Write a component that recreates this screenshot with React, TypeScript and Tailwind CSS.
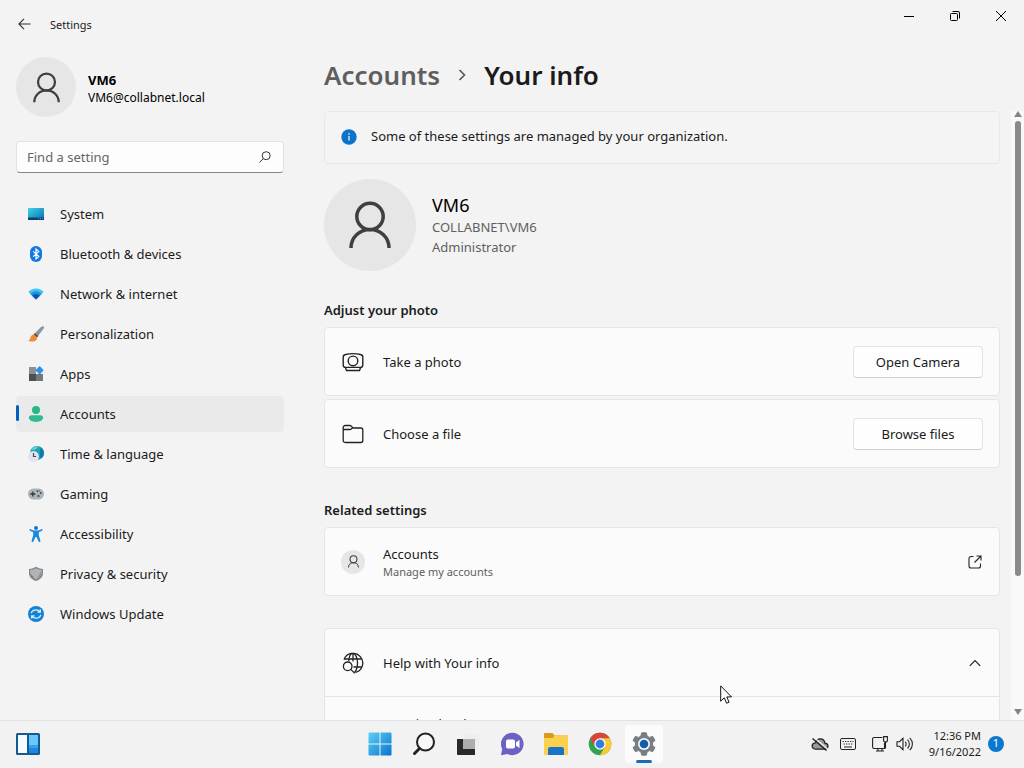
import type { ReactNode } from "react";

type NavItem = { label: string; icon: ReactNode; active?: boolean };

function UserIcon({ className, stroke = 2 }: { className?: string; stroke?: number }) {
  return (
    <svg viewBox="0 0 42 48" className={className} fill="none" stroke="#3f3f3f" strokeWidth={stroke}>
      <circle cx="21" cy="15.5" r="13.2" />
      <path d="M2 47c0-10.500 8.500-18.500 19-18.500s19 8 19 18.500" />
    </svg>
  );
}

const navItems: NavItem[] = [
  {
    label: "System",
    icon: (
      <svg viewBox="0 0 16 16" className="size-4">
        <defs>
          <linearGradient id="sys" x1="0" y1="0" x2="1" y2="1">
            <stop offset="0" stopColor="#3fd3e6" />
            <stop offset="1" stopColor="#0a6fb4" />
          </linearGradient>
        </defs>
        <rect y="2" width="16" height="12" rx="0.8" fill="url(#sys)" />
        <path d="M0 11.500h16v1.700a.8.8 0 0 1-.8.8H.8a.8.8 0 0 1-.8-.8z" fill="#0b3f70" />
        <path d="M10 12.700h1M12 12.700h1M14 12.700h1" stroke="#5fc4ee" strokeWidth="0.800" />
      </svg>
    ),
  },
  {
    label: "Bluetooth & devices",
    icon: (
      <svg viewBox="0 0 16 16" className="size-4">
        <rect x="2" width="12" height="16" rx="6" fill="#0f78e6" />
        <path d="M5.200 5.400l5.600 5L8 12.900V3.100l2.800 2.500-5.600 5" fill="none" stroke="#fff" strokeWidth="1.200" />
      </svg>
    ),
  },
  {
    label: "Network & internet",
    icon: (
      <svg viewBox="0 0 16 16" className="size-4">
        <path d="M8 13.500L.3 6C2.200 3.800 5 2.600 8 2.600S13.800 3.800 15.700 6z" fill="#45c5ee" />
        <path d="M8 13.500L2.300 7.900C3.700 6.200 5.700 5.300 8 5.300s4.300.9 5.700 2.600z" fill="#1c95dd" />
        <path d="M8 13.500l-3.800-3.700C5.200 8.700 6.500 8 8 8s2.800.7 3.800 1.800z" fill="#0c55b5" />
      </svg>
    ),
  },
  {
    label: "Personalization",
    icon: (
      <svg viewBox="0 0 16 16" className="size-4">
        <path d="M15.700.4c.6.6.2 1.800-.6 2.900L9.300 11 5.800 8.300 12.500 1.500C13.600.5 15.100-.2 15.700.4z" fill="#8798a3" />
        <path d="M6.900 7.200l3.400 2.800-1.300 1.600-3.500-3z" fill="#5f5148" />
        <path d="M5.500 8.500L9 11.400c.3 2-1.600 4-4.300 4.200-1.700.1-3.400-.3-4.500-1 1.800-.4 1.800-1.400 2.300-3 .5-1.700 1.500-2.900 3-3.100z" fill="#ef8a35" />
      </svg>
    ),
  },
  {
    label: "Apps",
    icon: (
      <svg viewBox="0 0 16 16" className="size-4">
        <path d="M1 1h7v7H1z" fill="#8d9092" />
        <path d="M1 8h7v7H1z" fill="#4c4f52" />
        <path d="M8 8h7v7H8z" fill="#75787b" />
        <rect x="8.600" y="1.200" width="6" height="6" rx="0.800" transform="rotate(45 11.600 4.200)" fill="#2f91e4" />
      </svg>
    ),
  },
  {
    label: "Accounts",
    active: true,
    icon: (
      <svg viewBox="0 0 16 16" className="size-4">
        <circle cx="8" cy="4" r="4" fill="#27b78c" />
        <path d="M3.400 9.300h9.200c1.600 0 2.500.9 2.500 2.300 0 2.600-3 4.400-7.100 4.400S.9 14.200.9 11.600c0-1.400.9-2.300 2.500-2.300z" fill="#2fba91" />
      </svg>
    ),
  },
  {
    label: "Time & language",
    icon: (
      <svg viewBox="0 0 16 16" className="size-4">
        <circle cx="9" cy="7" r="7" fill="#1ba3b8" />
        <path d="M12 .7c1 1.300 1 2.300 0 3.800s1 2.500 0 4.500 1 2 1.500 3.200A7 7 0 0 0 12 .7z" fill="#1277ae" />
        <path d="M4 3c2-2 4-2.500 6-2.500C9 3 7 4 4 4z" fill="#68d7d4" />
        <circle cx="5.500" cy="10.400" r="5.400" fill="#e6e1ee" />
        <path d="M5.500 7v3.500h2.600" fill="none" stroke="#45475a" strokeWidth="1.200" />
      </svg>
    ),
  },
  {
    label: "Gaming",
    icon: (
      <svg viewBox="0 0 16 16" className="size-4">
        <rect y="2.500" width="16" height="11" rx="5.500" fill="#aab4ba" />
        <path d="M4.800 5.500v5M2.300 8h5" stroke="#34393d" strokeWidth="1.300" />
        <g fill="#3f474d">
          <circle cx="9.500" cy="5.200" r="0.900" />
          <circle cx="12.800" cy="7" r="0.900" />
          <circle cx="10.500" cy="10" r="1.100" />
          <circle cx="11.500" cy="4.800" r="0.500" />
        </g>
      </svg>
    ),
  },
  {
    label: "Accessibility",
    icon: (
      <svg viewBox="0 0 16 16" className="size-4">
        <circle cx="8" cy="2" r="2" fill="#1278d4" />
        <path d="M2.300 3c1.800 1.200 3.800 1.500 5.700 1.500s3.900-.3 5.700-1.500c.8-.2 1.100.9.500 1.400-1 .8-2.400 1.300-3.400 1.600v3.200l1.600 5.600c.2 1.200-1.300 1.600-1.800.6L8.500 11h-1l-2.100 4.400c-.5 1-2 .6-1.800-.6l1.600-5.600V6c-1-.3-2.400-.8-3.400-1.600-.6-.5-.3-1.600.5-1.400z" fill="#1b87de" />
      </svg>
    ),
  },
  {
    label: "Privacy & security",
    icon: (
      <svg viewBox="0 0 16 16" className="size-4">
        <path d="M8 .8c2 1.300 4.300 2 7 2.200v4.200c0 3.600-2.700 6.200-7 7.900-4.300-1.700-7-4.300-7-7.900V3c2.700-.2 5-.9 7-2.200z" fill="#82868a" />
        <path d="M8 2.200c1.700 1 3.600 1.600 5.800 1.900v3.200L8 13.700 2.200 7.300V4.100C4.400 3.800 6.300 3.200 8 2.200z" fill="#b1b4b7" />
        <path d="M8 13.700c3.300-1.400 5.800-3.400 5.800-6.400V4.100z" fill="#969a9e" />
      </svg>
    ),
  },
  {
    label: "Windows Update",
    icon: (
      <svg viewBox="0 0 16 16" className="size-4">
        <circle cx="8" cy="8" r="8" fill="#1583d2" />
        <path d="M3.300 7.200c.5-2 2.400-3.300 4.700-3.300 1.600 0 2.900.6 3.900 1.800M12.300 3.500v2.700H9.500M12.700 8.800c-.5 2-2.400 3.300-4.700 3.300-1.600 0-2.900-.6-3.900-1.800M3.700 12.500V9.800h2.800" fill="none" stroke="#dff3ff" strokeWidth="1.300" />
      </svg>
    ),
  },
];

function Sidebar() {
  return (
    <aside className="flex w-[284px] shrink-0 flex-col pl-4 pt-[9px]">
      <div className="flex items-center gap-3">
        <div className="flex size-[60px] items-center justify-center rounded-full bg-[#e6e6e6]">
          <UserIcon className="h-[31px] w-[27px]" stroke={3.5} />
        </div>
        <div className="pt-[3px]">
          <p className="text-[13px] font-bold leading-[18px] text-black">VM6</p>
          <p className="text-[12px] leading-[18px] text-black">VM6@collabnet.local</p>
        </div>
      </div>
      <label className="mt-6 flex h-8 items-center rounded border border-b-[#868686] border-[#e3e3e3] bg-[#fdfdfd] pl-[10px] pr-3">
        <input
          type="text"
          aria-label="Find a setting"
          placeholder="Find a setting"
          className="min-w-0 flex-1 bg-transparent pt-0.5 text-[13px] outline-none placeholder:text-[#666]"
        />
        <svg viewBox="0 0 12 12" className="size-3" fill="none" stroke="#333" strokeWidth="1">
          <circle cx="7.200" cy="4.700" r="4" />
          <path d="M4.300 7.600L.4 11.500" />
        </svg>
      </label>
      <nav className="mt-[23px] flex flex-col gap-1">
        {navItems.map((item) => (
          <button
            key={item.label}
            type="button"
            className={
              item.active
                ? "relative flex h-9 items-center gap-4 rounded bg-[#eaeaea] pl-3 text-[13px]"
                : "relative flex h-9 items-center gap-4 rounded pl-3 text-[13px]"
            }
          >
            {item.active && <span className="absolute left-0 top-[9px] h-4 w-[3px] rounded-full bg-[#005fb8]" />}
            <span className="pb-px">{item.icon}</span>
            <span className="pt-0.5">{item.label}</span>
          </button>
        ))}
      </nav>
    </aside>
  );
}

function Card({ icon, title, children }: { icon: ReactNode; title: ReactNode; children?: ReactNode }) {
  return (
    <div className="flex h-[69px] items-center rounded border border-[#e5e5e5] bg-[#fbfbfb] px-4">
      <span className="flex w-6 justify-center">{icon}</span>
      <div className="ml-[18px] flex-1 text-[13px]">{title}</div>
      {children}
    </div>
  );
}

function CardButton({ children }: { children: ReactNode }) {
  return (
    <button
      type="button"
      className="h-8 w-[130px] rounded border border-[#e3e3e3] border-b-[#cfcfcf] bg-[#fefefe] pt-0.5 text-[13px]"
    >
      {children}
    </button>
  );
}

function Content() {
  return (
    <div className="min-w-0 flex-1 overflow-hidden">
      <div className="flex h-[53px] items-start rounded border border-[#e8e8e8] bg-[#f4f4f4] pl-4 pt-[14px]">
        <svg viewBox="0 0 16 16" className="mt-[3px] size-4">
          <circle cx="8" cy="8" r="7.700" fill="#0b74ca" />
          <path d="M8 7v4.500M8 4.300v1.400" stroke="#fff" strokeWidth="1.200" />
        </svg>
        <p className="ml-[14px] text-[13px] leading-5">Some of these settings are managed by your organization.</p>
      </div>

      <div className="mt-[15px] flex items-center gap-4">
        <div className="flex size-[92px] items-center justify-center rounded-full bg-[#e6e6e6]">
          <UserIcon className="h-12 w-[42px]" stroke={3.5} />
        </div>
        <div className="text-[13px] leading-5 text-[#606060]">
          <p className="text-[18px] leading-6 text-black">VM6</p>
          <p>COLLABNET\VM6</p>
          <p>Administrator</p>
        </div>
      </div>

      <h2 className="mt-[29px] text-[13px] font-semibold leading-5">Adjust your photo</h2>
      <div className="mt-[7px] flex flex-col gap-[3px]">
        <Card
          title={<p className="pt-0.5">Take a photo</p>}
          icon={
            <svg viewBox="0 0 22 20" className="h-5 w-[22px]" fill="none" stroke="#222" strokeWidth="1.400">
              <path d="M3.500 2.500C8 1.400 14 1.400 18.500 2.500c1.400.3 2.300 1.200 2.300 2.500v8c0 1.400-.9 2.400-2.300 2.400h-15C2.100 15.400 1.200 14.400 1.200 13V5c0-1.300.9-2.200 2.300-2.500z" />
              <circle cx="11" cy="8.900" r="4.800" />
              <path d="M3.500 15.700l1 2.800h13l1-2.800" />
            </svg>
          }
        >
          <CardButton>Open Camera</CardButton>
        </Card>
        <Card
          title={<p className="pt-0.5">Choose a file</p>}
          icon={
            <svg viewBox="0 0 22 20" className="h-5 w-[22px]" fill="none" stroke="#222" strokeWidth="1.300">
              <path d="M1.200 5V3.500c0-1.100.9-2 2-2h4.600c.6 0 1.100.2 1.500.6L11 4h7.800c1.100 0 2 .9 2 2v10.500c0 1.100-.9 2-2 2H3.200c-1.100 0-2-.9-2-2z" />
              <path d="M1.200 5.500h6.600c.6 0 1-.2 1.400-.5L10.500 4" />
            </svg>
          }
        >
          <CardButton>Browse files</CardButton>
        </Card>
      </div>

      <h2 className="mt-8 text-[13px] font-semibold leading-5">Related settings</h2>
      <a href="#accounts" className="mt-[7px] block">
        <Card
          icon={
            <span className="flex size-6 shrink-0 items-center justify-center rounded-full bg-[#e6e6e6]">
              <UserIcon className="h-[13px] w-[11px]" stroke={4} />
            </span>
          }
          title={
            <>
              <p className="leading-5">Accounts</p>
              <p className="text-[11px] leading-4 text-[#606060]">Manage my accounts</p>
            </>
          }
        >
          <svg viewBox="0 0 14 14" className="mr-px size-[14px]" fill="none" stroke="#222" strokeWidth="1.100">
            <path d="M5.500 1.500H3a2 2 0 0 0-2 2V11a2 2 0 0 0 2 2h7.500a2 2 0 0 0 2-2V8.500M8.500 1H13v4.500M13 1L6.500 7.500" />
          </svg>
        </Card>
      </a>

      <div className="mt-8 rounded-t border border-[#e5e5e5] bg-[#fbfbfb]">
        <button type="button" aria-expanded="true" className="flex h-[68px] w-full items-center border-b border-[#e5e5e5] px-4 text-left">
          <span className="flex w-6 justify-center">
            <svg viewBox="0 0 22 22" className="size-[22px]" fill="none" stroke="#222" strokeWidth="1.300">
              <path d="M2 7.500A9.700 9.700 0 1 1 13.500 20.400" />
              <path d="M6.800 9C7 4.500 8.800 1.300 11 1.300s4.500 4.300 4.500 9.700-1.500 8-3 9.500M2.300 7h17.400M11.500 15h8.200M11 1.300V9.500" />
              <circle cx="5.700" cy="14.300" r="4.300" />
              <path d="M8.800 17.400l4 4" />
            </svg>
          </span>
          <span className="ml-[18px] flex-1 pt-0.5 text-[13px]">Help with Your info</span>
          <svg viewBox="0 0 12 8" className="mr-[2px] h-2 w-3" fill="none" stroke="#222" strokeWidth="1.200">
            <path d="M.8 6.800L6 1.500l5.200 5.300" />
          </svg>
        </button>
        <p className="pl-[58px] pt-[17px] text-[13px] leading-5">Creating local user account</p>
      </div>
    </div>
  );
}

function Scrollbar() {
  return (
    <div className="ml-[11px] flex w-[13px] shrink-0 flex-col items-center bg-[#f9f9f9]">
      <svg viewBox="0 0 8 6" className="h-[6px] w-2">
        <path d="M4 0l4 6H0z" fill="#858585" />
      </svg>
      <span className="mt-1 h-[455px] w-[6px] rounded-full bg-[#8a8a8a]" />
      <svg viewBox="0 0 8 6" className="mb-[5px] mt-auto h-[6px] w-2">
        <path d="M0 0h8L4 6z" fill="#858585" />
      </svg>
    </div>
  );
}

function TaskButton({ label, active, children }: { label: string; active?: boolean; children: ReactNode }) {
  return (
    <button type="button" aria-label={label} className="flex w-11 items-center justify-center">
      {active ? (
        <span className="relative flex size-[38px] items-center justify-center rounded bg-[#fbfbfb]">
          {children}
          <span className="absolute bottom-0 left-[11px] h-[3px] w-4 rounded-full bg-[#1a6cb8]" />
        </span>
      ) : (
        children
      )}
    </button>
  );
}

function Taskbar() {
  return (
    <footer className="grid h-12 shrink-0 grid-cols-[1fr_auto_1fr] border-t border-[#e1e1e1] bg-[#f2f2f2] pb-0.5">
      <button type="button" aria-label="Widgets" className="ml-4 justify-self-start">
        <svg viewBox="0 0 24 22" className="h-[22px] w-6">
          <rect width="24" height="22" rx="1.500" fill="#155a91" />
          <path d="M2 2h9v18H2z" fill="#f6fbff" />
          <path d="M13 2h9v10h-9z" fill="#68c8fa" />
          <path d="M13 12h9v8h-9z" fill="#1c87e5" />
          <path d="M13 12h9v3h-9z" fill="#36a0ed" />
        </svg>
      </button>
      <div className="flex">
        <TaskButton label="Start">
          <svg viewBox="0 0 24 24" className="size-6">
            <defs>
              <linearGradient id="win" x1="0" y1="0" x2="1" y2="1">
                <stop offset="0" stopColor="#5fd0f7" />
                <stop offset="1" stopColor="#0674cf" />
              </linearGradient>
            </defs>
            <path d="M1.500.5h10v11h-11v-10a1 1 0 0 1 1-1zM12.500.5h10a1 1 0 0 1 1 1v10h-11zM.5 12.500h11v11h-10a1 1 0 0 1-1-1zM12.500 12.500h11v10a1 1 0 0 1-1 1h-10z" fill="url(#win)" />
          </svg>
        </TaskButton>
        <TaskButton label="Search">
          <svg viewBox="0 0 24 24" className="size-6" fill="none">
            <circle cx="13.500" cy="10" r="8.500" fill="#f8f8f8" stroke="#222" strokeWidth="2" />
            <path d="M7.500 16.500l-5 5" stroke="#222" strokeWidth="3" strokeLinecap="round" />
          </svg>
        </TaskButton>
        <TaskButton label="Task view">
          <svg viewBox="0 0 24 24" className="size-6">
            <path d="M8 2h15v15H8z" fill="#eeeeee" />
            <path d="M1 7h18v16H2a1 1 0 0 1-1-1z" fill="#292929" />
            <path d="M7 7h12v10H7z" fill="#adadad" />
          </svg>
        </TaskButton>
        <TaskButton label="Chat">
          <svg viewBox="0 0 24 24" className="size-6">
            <path d="M12.500.8a11.200 11.200 0 1 1-5 21.300L1 23.300l1.200-6.200A11.200 11.200 0 0 1 12.500.8z" fill="#6a63c3" />
            <rect x="6" y="7.500" width="9" height="9" rx="1.700" fill="#fff" />
            <path d="M16 10.500l3.500-2.700v8.400L16 13.500z" fill="#fff" />
          </svg>
        </TaskButton>
        <TaskButton label="File Explorer">
          <svg viewBox="0 0 26 24" className="h-6 w-[26px]">
            <path d="M1 2a1 1 0 0 1 1-1h7.500l2 2.500H24a1 1 0 0 1 1 1V9H1z" fill="#d99a1d" />
            <path d="M1 6h8.500L12 3.500h12a1 1 0 0 1 1 1V22a1 1 0 0 1-1 1H2a1 1 0 0 1-1-1z" fill="#fad04f" />
            <path d="M5 23v-6a2 2 0 0 1 2-2h12a2 2 0 0 1 2 2v6z" fill="#1775c9" />
          </svg>
        </TaskButton>
        <TaskButton label="Chrome">
          <svg viewBox="0 0 24 24" className="size-6">
            <circle cx="12" cy="12" r="11.300" fill="#32a350" />
            <path d="M2.200 6.350A11.300 11.300 0 0 1 21.800 6.350H12L7.100 14.800z" fill="#dc4437" />
            <path d="M21.800 6.350A11.300 11.300 0 0 1 12 23.300l4.900-8.500L12 6.350z" fill="#fbc934" />
            <circle cx="12" cy="12" r="5.700" fill="#fff" />
            <circle cx="12" cy="12" r="4.400" fill="#347de0" />
          </svg>
        </TaskButton>
        <TaskButton label="Settings" active>
          <svg viewBox="0 0 24 24" className="size-6">
            <path d="M9.700.8h4.600l.8 3.300 2.300 1.300 3.300-1 2.300 4-2.500 2.300v2.600l2.500 2.300-2.300 4-3.300-1-2.300 1.300-.8 3.300H9.700l-.8-3.300-2.300-1.300-3.300 1-2.300-4 2.500-2.300v-2.600L1 8.400l2.300-4 3.300 1 2.300-1.300z" fill="#777d82" stroke="#777d82" strokeLinejoin="round" />
            <circle cx="12" cy="12" r="6" fill="#f2f7fc" />
            <circle cx="12" cy="12" r="4.300" fill="#145ca8" />
          </svg>
        </TaskButton>
      </div>
      <div className="flex items-center justify-end pr-5">
        <svg viewBox="0 0 18 16" className="h-4 w-[18px]" fill="#9b9b9b" stroke="#222" strokeWidth="1.300">
          <path d="M4.500 13.200h9.200c4.300-.2 4.200-5.700.2-6C13.200 1.500 5.800 1.400 4.600 6.900.3 6.900-.2 12.700 4.500 13.200z" />
          <path d="M3 1.500l14 12" stroke="#f2f2f2" strokeWidth="1.500" />
          <path d="M1.500 2.500l14 12" strokeWidth="1.500" />
        </svg>
        <svg viewBox="0 0 16 12" className="ml-[11px] h-3 w-4" fill="none" stroke="#222">
          <rect x="0.500" y="0.500" width="15" height="11" rx="1.500" />
          <path d="M2.500 3.500h11M3.500 6h9" strokeDasharray="1.300 1.200" strokeWidth="1.200" />
          <path d="M4 9h8" />
        </svg>
        <svg viewBox="0 0 16 16" className="ml-4 size-4" fill="none" stroke="#222" strokeWidth="1.100">
          <path d="M10.500 1.500H2a1.400 1.400 0 0 0-1.400 1.400v8.200A1.400 1.400 0 0 0 2 12.500h10.500V7M4 15h8M6 12.500V15M10 12.500V15" />
          <path d="M11.600.6h3.800v4.300l-.8 1h-2.200l-.8-1zM13.500 6v6.500" />
        </svg>
        <svg viewBox="0 0 17 16" className="ml-2 h-4 w-[17px]" fill="none" stroke="#222" strokeWidth="1.100">
          <path d="M1 5.700h2.500L7 2.300v11.400l-3.500-3.400H1zM9.200 5.600c1.300 1.300 1.300 3.500 0 4.800M11.500 3.700c2.500 2.400 2.500 6.200 0 8.600M13.700 1.800c3.600 3.500 3.600 8.900 0 12.400" />
        </svg>
        <div className="ml-4 text-right text-[11px] leading-4">
          <p>12:36 PM</p>
          <p>9/16/2022</p>
        </div>
        <span className="ml-[7px] flex size-4 items-center justify-center rounded-full bg-[#0b78d0] text-[11px] text-white">1</span>
      </div>
    </footer>
  );
}

export default function App() {
  return (
    <div className="relative flex h-screen flex-col overflow-hidden bg-[#f3f3f3] font-['Noto_Sans',sans-serif] text-[#1b1b1b]">
      <header className="flex h-12 shrink-0 items-start justify-between">
        <div className="flex h-12 items-center gap-[19px] pl-[18px]">
          <button type="button" aria-label="Back">
            <svg viewBox="0 0 13 12" className="h-3 w-[13px]" fill="none" stroke="#333" strokeWidth="1.100">
              <path d="M6 .8L.9 6 6 11.200M1 6h11.700" />
            </svg>
          </button>
          <span className="pt-0.5 text-[11px]">Settings</span>
        </div>
        <div className="flex h-8">
          <button type="button" aria-label="Minimize" className="flex w-[46px] items-center justify-center">
            <span className="h-px w-[10px] bg-black" />
          </button>
          <button type="button" aria-label="Restore" className="flex w-[46px] items-center justify-center">
            <svg viewBox="0 0 10 10" className="size-[10px]" fill="none" stroke="#000">
              <rect x="0.500" y="2.500" width="7" height="7" rx="1" />
              <path d="M2.500.5H8A1.500 1.500 0 0 1 9.500 2v5.500" />
            </svg>
          </button>
          <button type="button" aria-label="Close" className="flex w-[46px] items-center justify-center">
            <svg viewBox="0 0 10 10" className="size-[10px]" stroke="#000">
              <path d="M0 0l10 10M10 0L0 10" />
            </svg>
          </button>
        </div>
      </header>

      <div className="flex min-h-0 flex-1">
        <Sidebar />
        <main className="ml-10 flex min-w-0 flex-1 flex-col">
          <h1 className="flex h-[54px] items-center text-[26px] font-semibold">
            <a href="#accounts" className="text-[#5f5f5f]">Accounts</a>
            <svg viewBox="0 0 8 12" className="mx-[18px] h-3 w-2" fill="none" stroke="#555" strokeWidth="1.600">
              <path d="M1.500 1l5 5-5 5" />
            </svg>
            Your info
          </h1>
          <div className="mt-[9px] flex min-h-0 flex-1">
            <Content />
            <Scrollbar />
          </div>
        </main>
      </div>

      <Taskbar />

      <svg viewBox="0 0 12 19" className="absolute left-[720px] top-[685px] h-[19px] w-3" fill="#fff" stroke="#111">
        <path d="M.7.900v15.300l3.600-3.400 2.300 5.400 2.500-1-2.300-5.300h4.700z" />
      </svg>
    </div>
  );
}
